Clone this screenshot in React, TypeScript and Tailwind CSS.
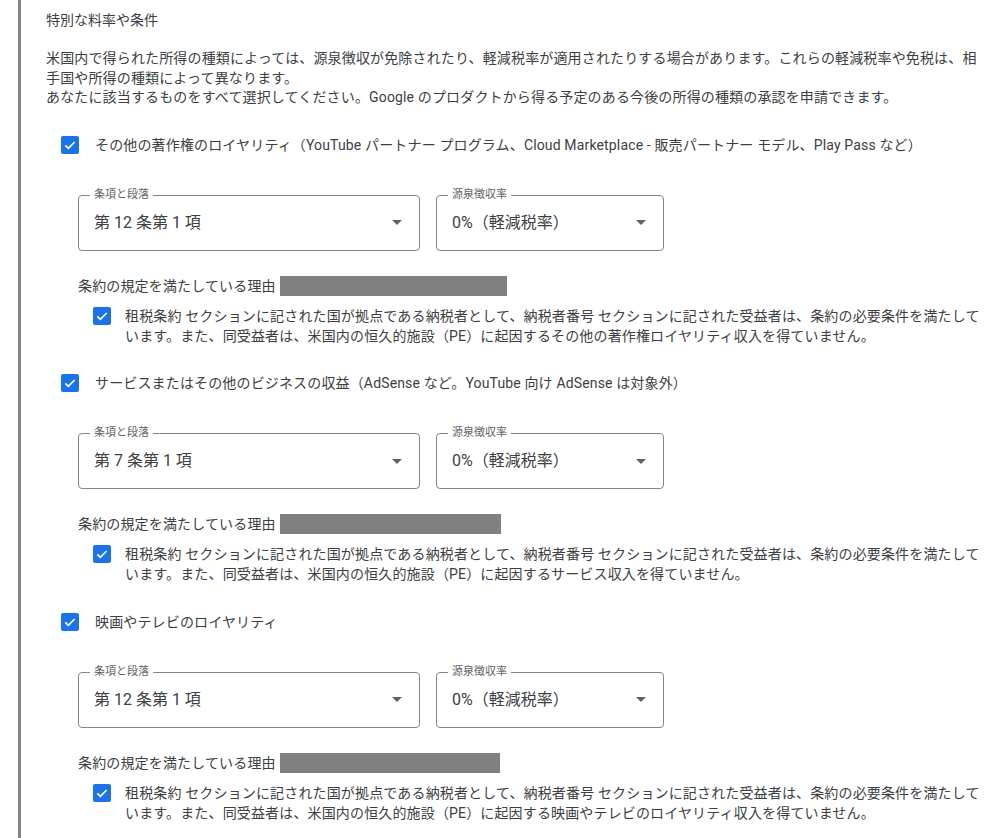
import { ReactNode } from "react"

const sections = [
  {
    label: "その他の著作権のロイヤリティ（YouTube パートナー プログラム、Cloud Marketplace - 販売パートナー モデル、Play Pass など）",
    article: "第 12 条第 1 項",
    bar: "w-[227px]",
    reason: "租税条約 セクションに記された国が拠点である納税者として、納税者番号 セクションに記された受益者は、条約の必要条件を満たしています。また、同受益者は、米国内の恒久的施設（PE）に起因するその他の著作権ロイヤリティ収入を得ていません。",
  },
  {
    label: "サービスまたはその他のビジネスの収益（AdSense など。YouTube 向け AdSense は対象外）",
    article: "第 7 条第 1 項",
    bar: "w-[221px]",
    reason: "租税条約 セクションに記された国が拠点である納税者として、納税者番号 セクションに記された受益者は、条約の必要条件を満たしています。また、同受益者は、米国内の恒久的施設（PE）に起因するサービス収入を得ていません。",
  },
  {
    label: "映画やテレビのロイヤリティ",
    article: "第 12 条第 1 項",
    bar: "w-[220px]",
    reason: "租税条約 セクションに記された国が拠点である納税者として、納税者番号 セクションに記された受益者は、条約の必要条件を満たしています。また、同受益者は、米国内の恒久的施設（PE）に起因する映画やテレビのロイヤリティ収入を得ていません。",
  },
]

const CheckBox = () => (
  <span className="flex h-[18px] w-[18px] shrink-0 items-center justify-center rounded-[2px] bg-[#1a73e8]">
    <svg viewBox="0 0 24 24" className="h-[16px] w-[16px]" fill="none" stroke="white" strokeWidth="2.6">
      <path d="M5 12.5l4.5 4.5L19 7.5" />
    </svg>
  </span>
)

const Select = ({ label, value, width }: { label: string; value: string; width: string }) => (
  <div className={`relative h-[56px] ${width} rounded-[4px] border border-[#80868b] flex items-center pl-[15px] pr-[17px]`}>
    <span className="absolute -top-[9px] left-[11px] bg-white px-[4px] text-[11px] leading-[16px] tracking-normal text-[#5f6368]">{label}</span>
    <span className="flex-1 text-[16px] tracking-normal text-[#3c4043]">{value}</span>
    <svg viewBox="0 0 10 5" className="h-[5px] w-[10px]">
      <path d="M0 0l5 5 5-5z" fill="#5f6368" />
    </svg>
  </div>
)

const Row = ({ children }: { children: ReactNode }) => (
  <div className="flex items-start gap-[16px] pl-[15px]">
    <div className="pt-[1px]"><CheckBox /></div>
    <p className="leading-[20px]">{children}</p>
  </div>
)

export default function App() {
  return (
    <div className="min-h-screen bg-white font-['Roboto','Noto_Sans_CJK_JP',sans-serif] text-[14px] tracking-[0.15px] text-[#3c4043]">
      <div className="ml-[18px] min-h-screen border-l-[3px] border-[#80868b] pl-[25px] pr-[22px] pt-[10px]">
        <h2 className="leading-[20px] tracking-normal">特別な料率や条件</h2>
        <p className="mt-[19px] leading-[19.5px]">
          米国内で得られた所得の種類によっては、源泉徴収が免除されたり、軽減税率が適用されたりする場合があります。これらの軽減税率や免税は、相手国や所得の種類によって異なります。
          <br />
          あなたに該当するものをすべて選択してください。Google のプロダクトから得る予定のある今後の所得の種類の承認を申請できます。
        </p>

        <div className="mt-[27px] flex flex-col gap-[27.5px]">
          {sections.map((s, i) => (
            <section key={i}>
              <Row>{s.label}</Row>
              <div className="mt-[40px] ml-[32px] flex gap-[16px]">
                <Select label="条項と段落" value={s.article} width="w-[342px]" />
                <Select label="源泉徴収率" value="0%（軽減税率）" width="w-[228px]" />
              </div>
              <div className="mt-[25px] ml-[32px] flex items-center gap-[4px] leading-[20px]">
                <span>条約の規定を満たしている理由</span>
                <span className={`h-[20px] ${s.bar} bg-[#808080]`} />
              </div>
              <div className="mt-[10px] ml-[47px] flex items-start gap-[14px]">
                <div className="pt-[1px]"><CheckBox /></div>
                <p className="leading-[20px]">{s.reason}</p>
              </div>
            </section>
          ))}
        </div>
      </div>
    </div>
  )
}
